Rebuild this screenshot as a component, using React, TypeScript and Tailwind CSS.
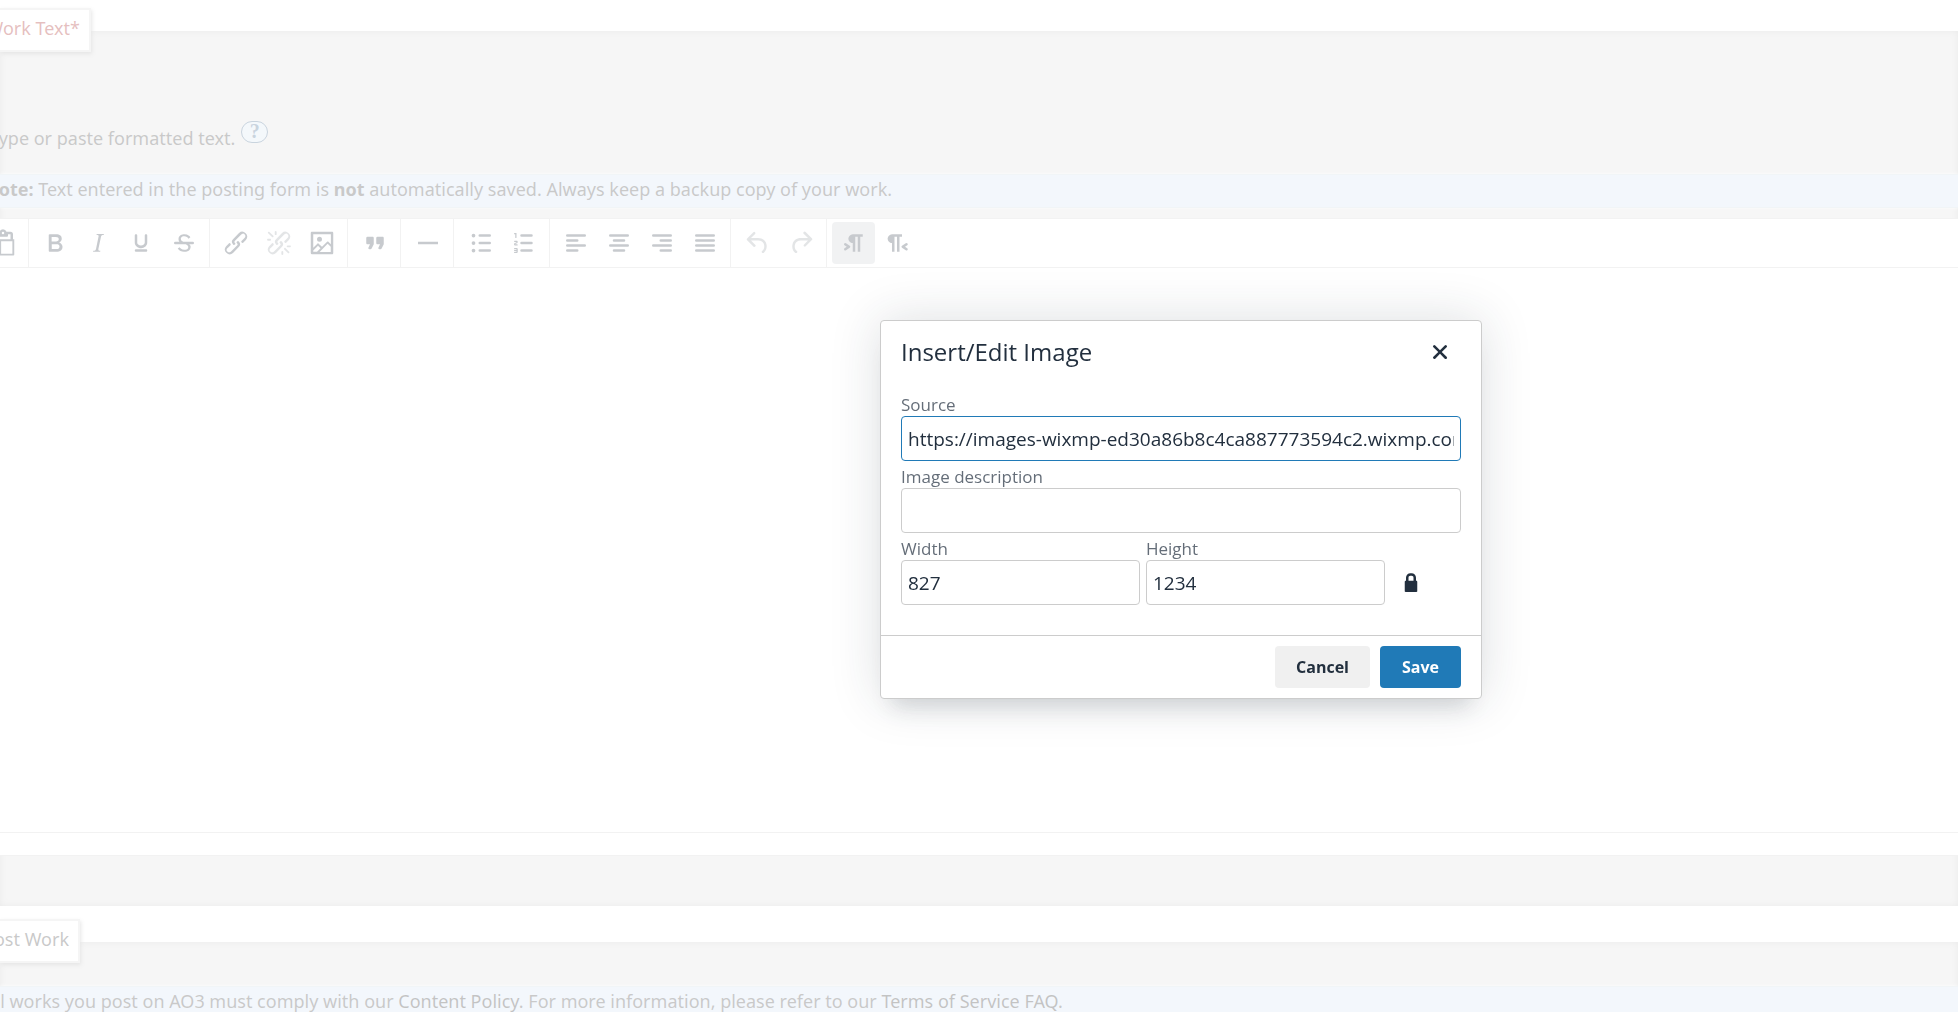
import { ReactNode, useState } from "react";

const Icon = ({ d, className = "" }: { d: string; className?: string }) => (
  <svg viewBox="0 0 24 24" className={`w-[30px] h-[30px] fill-current ${className}`} aria-hidden="true">
    <path fillRule="evenodd" d={d} />
  </svg>
);

const icons = {
  paste:
    "M18 9V5h-2v1c0 .6-.4 1-1 1H9a1 1 0 0 1-1-1V5H6v13h3V9h9ZM9 20H6a2 2 0 0 1-2-2V5c0-1.1.9-2 2-2h3.2A3 3 0 0 1 12 1a3 3 0 0 1 2.8 2H18a2 2 0 0 1 2 2v4h1v12.1c0 .5-.4.9-.9.9H9.9a.9.9 0 0 1-.9-.9V20ZM12 3a1 1 0 1 0 0 2 1 1 0 0 0 0-2Zm7.5 7.5h-9v10h9v-10Z",
  bold: "M7.8 19c-.3 0-.5 0-.6-.2l-.2-.5V5.7c0-.2 0-.4.2-.5l.6-.2h5c1.5 0 2.7.3 3.5 1 .7.6 1.1 1.4 1.1 2.5a3 3 0 0 1-.6 1.9c-.4.6-1 1-1.6 1.2.4.1.9.3 1.3.6s.8.7 1 1.2c.4.4.5 1 .5 1.6 0 1.3-.4 2.3-1.3 3-.8.7-2.1 1-3.8 1H7.8Zm5-8.3c.6 0 1.2-.1 1.6-.5.4-.3.6-.7.6-1.3 0-1.1-.8-1.7-2.3-1.7H9.3v3.5h3.4Zm.5 6c.7 0 1.3-.1 1.7-.4.4-.4.6-.9.6-1.5s-.2-1-.7-1.4c-.4-.3-1-.4-2-.4H9.4v3.8h4Z",
  italic:
    "m16.7 4.7-.1.9h-.3c-.6 0-1 0-1.4.3-.3.3-.4.6-.5 1.1l-2.1 9.8v.6c0 .5.4.8 1.4.8h.2l-.2.8H8l.2-.8h.2c1.1 0 1.8-.5 2-1.5l2-9.8.1-.5c0-.6-.4-.8-1.4-.8h-.3l.2-.9h5.8Z",
  underline:
    "M16 5c.6 0 1 .4 1 1v5.5a4 4 0 0 1-.4 1.8l-1 1.4a5.3 5.3 0 0 1-5.5 1 5 5 0 0 1-1.6-1c-.5-.4-.8-.9-1.1-1.4a4 4 0 0 1-.4-1.8V6c0-.6.4-1 1-1s1 .4 1 1v5.5c0 .3 0 .6.2 1l.6.7a3.3 3.3 0 0 0 2.2.8 3.4 3.4 0 0 0 2.2-.8c.3-.2.4-.5.6-.8l.2-.9V6c0-.6.4-1 1-1ZM8 17h8c.6 0 1 .4 1 1s-.4 1-1 1H8a1 1 0 0 1 0-2Z",
  link: "M6.2 12.3a1 1 0 0 1 1.4 1.4l-2 2a2 2 0 1 0 2.6 2.8l4.8-4.8a1 1 0 0 0 0-1.4 1 1 0 1 1 1.4-1.3 2.9 2.9 0 0 1 0 4L9.6 20a3.9 3.9 0 0 1-5.5-5.5l2-2Zm11.6-.6a1 1 0 0 1-1.4-1.4l2-2a2 2 0 1 0-2.6-2.8L11 10.3a1 1 0 0 0 0 1.4A1 1 0 1 1 9.6 13a2.9 2.9 0 0 1 0-4L14.4 4a3.9 3.9 0 0 1 5.5 5.5l-2 2Z",
  sparks:
    "M7.6 6.3a.8.8 0 0 1-1 1.1L3.3 4.2a.7.7 0 1 1 1-1l3.2 3.1ZM5.1 8.6a.8.8 0 0 1 0 1.5H3a.8.8 0 0 1 0-1.5H5Zm5-3.5a.8.8 0 0 1-1.5 0V3a.8.8 0 0 1 1.5 0V5Zm6 11.8a.8.8 0 0 1 1-1l3.2 3.2a.8.8 0 0 1-1 1L16 17Zm-2.2 2a.8.8 0 0 1 1.5 0V21a.8.8 0 0 1-1.5 0V19Zm5-3.5a.7.7 0 1 1 0-1.5H21a.8.8 0 0 1 0 1.5H19Z",
  strike:
    "M15.6 8.5c-.5-.7-1-1.1-1.3-1.3-.6-.4-1.3-.6-2-.6-2.7 0-2.8 1.7-2.8 2.1 0 1.1.9 1.8 2 2.3H19a1 1 0 0 1 0 2h-3c1.1.6 1.3 1.4 1.3 1.9 0 1.4-.7 4.1-5 4.1A6.2 6.2 0 0 1 7 16.4l1.5-1.1c.4.6 1.6 2 3.7 2 1.6 0 2.5-.4 3-1.2.4-.8.3-2-.8-2.6l-1-.5H5a1 1 0 0 1 0-2h3.3c-.4-.5-.7-1.2-.7-2.1C7.6 6 10.3 5 12.4 5c2.9 0 4.2 1.6 4.7 2.4l-1.5 1.1Z",
  image:
    "m5 15.7 3.3-3.2c.3-.3.7-.3 1 0L12 15l4.1-4c.3-.4.8-.4 1 0l2 1.9V5H5v10.7ZM5 18V19h3l2.8-2.9-2-2L5 17.9Zm14-3-2.5-2.4-6.4 6.5H19v-4ZM4 3h16c.6 0 1 .4 1 1v16c0 .6-.4 1-1 1H4a1 1 0 0 1-1-1V4c0-.6.4-1 1-1Zm6 8a2 2 0 1 0 0-4 2 2 0 0 0 0 4Z",
  quote:
    "M7.5 17h.9c.4 0 .7-.2.9-.6L11 13V8c0-.6-.4-1-1-1H6a1 1 0 0 0-1 1v4c0 .6.4 1 1 1h2l-1.3 2.7a1 1 0 0 0 .8 1.3Zm8 0h.9c.4 0 .7-.2.9-.6L19 13V8c0-.6-.4-1-1-1h-4a1 1 0 0 0-1 1v4c0 .6.4 1 1 1h2l-1.3 2.7a1 1 0 0 0 .8 1.3Z",
  rule: "M4 11h16v2H4z",
  bullets:
    "M11 5h8a1 1 0 0 1 0 2h-8a1 1 0 0 1 0-2Zm0 6h8a1 1 0 0 1 0 2h-8a1 1 0 0 1 0-2Zm0 6h8a1 1 0 0 1 0 2h-8a1 1 0 0 1 0-2ZM4.5 6a1.5 1.5 0 1 1 3 0 1.5 1.5 0 0 1-3 0Zm0 6a1.5 1.5 0 1 1 3 0 1.5 1.5 0 0 1-3 0Zm0 6a1.5 1.5 0 1 1 3 0 1.5 1.5 0 0 1-3 0Z",
  numbers:
    "M10 17h8a1 1 0 0 1 0 2h-8a1 1 0 0 1 0-2Zm0-6h8a1 1 0 0 1 0 2h-8a1 1 0 0 1 0-2Zm0-6h8a1 1 0 0 1 0 2h-8a1 1 0 1 1 0-2ZM6 4v3.5c0 .3-.2.5-.5.5a.5.5 0 0 1-.5-.5V5h-.5a.5.5 0 0 1 0-1H6Zm-1 8.8.2.2h1.3c.3 0 .5.2.5.5s-.2.5-.5.5H4.9a1 1 0 0 1-.9-1V13c0-.4.3-.8.6-1l1.2-.4.2-.3a.2.2 0 0 0-.2-.2H4.5a.5.5 0 0 1-.5-.5c0-.3.2-.5.5-.5h1.6c.5 0 .9.4.9 1v.1c0 .4-.3.8-.6 1l-1.2.4-.2.3ZM7 17v2c0 .6-.4 1-1 1H4.5a.5.5 0 0 1 0-1h1.2c.2 0 .3-.1.3-.3 0-.2-.1-.3-.3-.3H4.4a.4.4 0 1 1 0-.8h1.3c.2 0 .3-.1.3-.3 0-.2-.1-.3-.3-.3H4.5a.5.5 0 1 1 0-1H6c.6 0 1 .4 1 1Z",
  alignLeft:
    "M5 5h14a1 1 0 0 1 0 2H5a1 1 0 1 1 0-2Zm0 4h8a1 1 0 0 1 0 2H5a1 1 0 1 1 0-2Zm0 8h8a1 1 0 0 1 0 2H5a1 1 0 0 1 0-2Zm0-4h14a1 1 0 0 1 0 2H5a1 1 0 0 1 0-2Z",
  alignCenter:
    "M5 5h14a1 1 0 0 1 0 2H5a1 1 0 1 1 0-2Zm3 4h8a1 1 0 0 1 0 2H8a1 1 0 1 1 0-2Zm0 8h8a1 1 0 0 1 0 2H8a1 1 0 0 1 0-2Zm-3-4h14a1 1 0 0 1 0 2H5a1 1 0 0 1 0-2Z",
  alignRight:
    "M5 5h14a1 1 0 0 1 0 2H5a1 1 0 1 1 0-2Zm6 4h8a1 1 0 0 1 0 2h-8a1 1 0 0 1 0-2Zm0 8h8a1 1 0 0 1 0 2h-8a1 1 0 0 1 0-2Zm-6-4h14a1 1 0 0 1 0 2H5a1 1 0 0 1 0-2Z",
  justify:
    "M5 5h14a1 1 0 0 1 0 2H5a1 1 0 1 1 0-2Zm0 4h14a1 1 0 0 1 0 2H5a1 1 0 1 1 0-2Zm0 4h14a1 1 0 0 1 0 2H5a1 1 0 0 1 0-2Zm0 4h14a1 1 0 0 1 0 2H5a1 1 0 0 1 0-2Z",
  undo: "M6.4 8H12c3.7 0 6.2 2 6.8 5.1.6 2.7-.4 5.6-2.3 6.8a1 1 0 0 1-1-1.8c1.1-.6 1.8-2.7 1.4-4.6-.5-2.1-2.1-3.5-4.9-3.5H6.4l3.3 3.3a1 1 0 1 1-1.4 1.4l-5-5a1 1 0 0 1 0-1.4l5-5a1 1 0 0 1 1.4 1.4L6.4 8Z",
  redo: "M17.6 10H12c-2.8 0-4.4 1.4-4.9 3.5-.4 2 .3 4 1.4 4.6a1 1 0 1 1-1 1.8c-2-1.2-2.9-4.1-2.3-6.8.6-3 3-5.1 6.8-5.1h5.6l-3.3-3.3a1 1 0 1 1 1.4-1.4l5 5a1 1 0 0 1 0 1.4l-5 5a1 1 0 0 1-1.4-1.4l3.3-3.3Z",
  ltr: "M11 5h8v2h-2v12h-2V7h-2v12h-2v-7c-.5 0-1 0-1.4-.3A3.4 3.4 0 0 1 7.8 10a3.3 3.3 0 0 1 0-2.8 3.4 3.4 0 0 1 1.8-1.8L11 5ZM4.4 16.2 6.2 15l-1.8-1.2a1 1 0 0 1 1.2-1.6l3 2a1 1 0 0 1 0 1.6l-3 2a1 1 0 1 1-1.2-1.6Z",
  rtl: "M8 5h8v2h-2v12h-2V7h-2v12H8v-7c-.5 0-1 0-1.4-.3A3.4 3.4 0 0 1 4.8 10a3.3 3.3 0 0 1 0-2.8 3.4 3.4 0 0 1 1.8-1.8L8 5Zm12.2 11.2a1 1 0 1 1-1.2 1.6l-3-2a1 1 0 0 1 0-1.6l3-2a1 1 0 1 1 1.2 1.6L18.4 15l1.8 1.2Z",
  close:
    "M17.3 8.2 13.4 12l3.9 3.8a1 1 0 0 1-1.5 1.5L12 13.4l-3.8 3.9a1 1 0 0 1-1.5-1.5l3.9-3.8-3.9-3.8a1 1 0 0 1 1.5-1.5l3.8 3.9 3.8-3.9a1 1 0 0 1 1.5 1.5Z",
  lock: "M16.3 11c.2 0 .4.1.5.2l.2.6v7.4c0 .3 0 .4-.2.6l-.6.2H7.8l-.6-.2a.7.7 0 0 1-.2-.6v-7.4c0-.2 0-.4.2-.6l.5-.2H8V8.5A3.5 3.5 0 0 1 11.5 5h1A3.5 3.5 0 0 1 16 8.5V11h.3ZM10 11h4V8.5c0-.9-.6-1.5-1.5-1.5h-1c-.9 0-1.5.6-1.5 1.5V11Z",
};

const groups = [
  [
    { label: "Bold", d: icons.bold },
    { label: "Italic", d: icons.italic },
    { label: "Underline", d: icons.underline },
    { label: "Strikethrough", d: icons.strike },
  ],
  [
    { label: "Insert/edit link", d: icons.link },
    { label: "Remove link", d: icons.link + icons.sparks, disabled: true },
    { label: "Insert/edit image", d: icons.image },
  ],
  [{ label: "Blockquote", d: icons.quote }],
  [{ label: "Horizontal line", d: icons.rule }],
  [
    { label: "Bullet list", d: icons.bullets },
    { label: "Numbered list", d: icons.numbers },
  ],
  [
    { label: "Align left", d: icons.alignLeft },
    { label: "Align center", d: icons.alignCenter },
    { label: "Align right", d: icons.alignRight },
    { label: "Justify", d: icons.justify },
  ],
  [
    { label: "Undo", d: icons.undo, disabled: true },
    { label: "Redo", d: icons.redo, disabled: true },
  ],
  [
    { label: "Left to right", d: icons.ltr, active: true },
    { label: "Right to left", d: icons.rtl },
  ],
];

const Heading = ({ children, className }: { children: ReactNode; className: string }) => (
  <h3 className={`flex justify-end h-11 -mt-[23px] pr-[9px] pt-1 overflow-hidden whitespace-nowrap bg-white border-2 border-l-0 border-[#d5d5d5] shadow-[1px_2px_4px_#999] ${className}`}>
    {children}
  </h3>
);

const Notice = ({ children }: { children: ReactNode }) => (
  <p className="h-[34px] whitespace-nowrap bg-[#cfdff2] border-y border-[#c5d5e0] shadow-[0_0_3px_#fff]">{children}</p>
);

const Toolbar = () => (
  <div role="toolbar" className="flex h-[50px] bg-white border-y border-[#ccc] text-[#222f3e]">
    <div className="flex justify-end items-center w-[29px] pr-1 overflow-hidden border-r border-[#ccc]">
      <button aria-label="Paste" className="flex shrink-0 justify-center items-center w-[43px] h-[42px]">
        <Icon d={icons.paste} />
      </button>
    </div>
    {groups.map((group, index) => (
      <div key={index} className={`flex items-center pr-1 border-[#ccc] ${group.length < 3 ? "pl-[5px]" : "pl-1"} ${index < groups.length - 1 ? "border-r" : ""}`}>
        {group.map((item) => (
          <button
            key={item.label}
            aria-label={item.label}
            disabled={item.disabled}
            className={`flex justify-center items-center w-[43px] h-[42px] rounded disabled:opacity-50 ${item.active ? "bg-[#c8cbcf]" : ""}`}
          >
            <Icon d={item.d} />
          </button>
        ))}
      </div>
    ))}
  </div>
);

const Field = ({ id, label, value, className = "" }: { id: string; label: string; value: string; className?: string }) => {
  const [text, setText] = useState(value);
  return (
    <div className={className}>
      <label htmlFor={id} className="block text-[17px] leading-[22px] text-[#222f3e]/70">
        {label}
      </label>
      <input
        id={id}
        value={text}
        onChange={(e) => setText(e.target.value)}
        className={`block w-full h-[45px] px-[6px] pt-px rounded border bg-white text-[19px] text-[#222f3e] outline-none ${id === "source" ? "border-[#207ab7]" : "border-[#ccc]"}`}
      />
    </div>
  );
};

const ImageDialog = () => (
  <div role="dialog" aria-label="Insert/Edit Image" className="w-[602px] rounded border border-[#ccc] bg-white text-[#222f3e] font-['Open_Sans',sans-serif] shadow-[0_20px_20px_-12px_rgba(34,47,62,0.15),0_0_50px_1px_rgba(34,47,62,0.15)]">
    <div className="flex justify-between items-center px-5 pt-[10px]">
      <h2 className="text-2xl leading-[42px]">Insert/Edit Image</h2>
      <button aria-label="Close" className="flex justify-center items-center w-[42px] h-[42px]">
        <Icon d={icons.close} />
      </button>
    </div>
    <div className="flex flex-col gap-[5px] px-5 pt-[21px] pb-[30px]">
      <Field id="source" label="Source" value="https://images-wixmp-ed30a86b8c4ca887773594c2.wixmp.com" />
      <Field id="description" label="Image description" value="" />
      <div className="flex items-end gap-[6px]">
        <Field id="width" label="Width" value="827" className="w-[239px]" />
        <Field id="height" label="Height" value="1234" className="w-[239px]" />
        <button aria-label="Constrain proportions" className="flex justify-center items-center w-10 h-[45px]">
          <Icon d={icons.lock} />
        </button>
      </div>
    </div>
    <div className="flex justify-end gap-[10px] px-5 py-[10px] border-t border-[#ccc] font-bold text-base">
      <button className="w-[95px] h-[42px] rounded bg-[#f0f0f0]">Cancel</button>
      <button className="w-[81px] h-[42px] rounded bg-[#207ab7] text-white">Save</button>
    </div>
  </div>
);

export default function App() {
  return (
    <div className="h-screen overflow-hidden bg-white text-lg leading-7 text-[#2a2a2a] font-['Noto_Sans',sans-serif]">
      <main className="flex flex-col gap-9 pt-[31px]">
        <section className="flex flex-col pb-[50px] bg-[#dadada] shadow-[inset_0_0_6px_#aaa]">
          <Heading className="w-[91px] text-[#900]">Work Text*</Heading>
          <div className="flex items-start gap-[6px] -ml-[11px] pt-[69px] pb-[22px]">
            <p className="pt-[3px] whitespace-nowrap">Type or paste formatted text.</p>
            <a href="#help" aria-label="Help" className="w-[27px] h-[22px] rounded-full border border-[#2a547c] bg-[#d1e1ef] text-center font-['Liberation_Serif',serif] font-bold text-xl leading-[18px] text-[#2a547c]">
              ?
            </a>
          </div>
          <Notice>
            <span className="-ml-4">
              <b>Note:</b> Text entered in the posting form is <b>not</b> automatically saved. Always keep a backup copy of your work.
            </span>
          </Notice>
          <div className="pt-[10px]">
            <Toolbar />
            <div className="h-[565px] bg-white border-b border-[#ccc]" />
            <div className="h-[23px] bg-white border-b border-[#ccc]" />
          </div>
        </section>
        <section className="flex flex-col pb-[50px] bg-[#dadada] shadow-[inset_0_0_6px_#aaa]">
          <Heading className="w-[80px]">Post Work</Heading>
          <div className="pt-[23px]">
            <Notice>
              <span className="-ml-4">
                All works you post on AO3 must comply with our <a href="#content" className="text-[#111]">Content Policy</a>. For more information, please refer to our{" "}
                <a href="#tos" className="text-[#111]">Terms of Service FAQ</a>.
              </span>
            </Notice>
          </div>
        </section>
      </main>
      <div className="fixed inset-0 flex justify-center items-center pl-[404px] pt-[6px] bg-white/75">
        <ImageDialog />
      </div>
    </div>
  );
}
